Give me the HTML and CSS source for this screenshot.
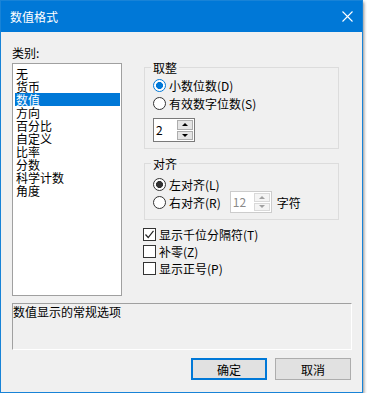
FILE: index.html
```html
<!DOCTYPE html>
<html lang="zh-CN">
<head>
    <meta charset="UTF-8">
    <title>数值格式</title>
    <link rel="stylesheet" href="styles.css">
</head>
<body>
    <div class="window">
        <div class="titlebar">
            <span class="title">数值格式</span>
            <span class="close">
                <svg width="11" height="11" viewBox="0 0 11 11">
                    <path d="M0.5 0.5 L10.5 10.5 M10.5 0.5 L0.5 10.5" stroke="#fff" stroke-width="1.1" fill="none"/>
                </svg>
            </span>
        </div>

        <div class="content">
            <div class="main">
                <div class="left-col">
                    <div class="field-label">类别:</div>
                    <ul class="category-list">
                        <li>无</li>
                        <li>货币</li>
                        <li class="selected">数值</li>
                        <li>方向</li>
                        <li>百分比</li>
                        <li>自定义</li>
                        <li>比率</li>
                        <li>分数</li>
                        <li>科学计数</li>
                        <li>角度</li>
                    </ul>
                </div>

                <div class="right-col">
                    <fieldset class="group rounding">
                        <legend>取整</legend>
                        <div class="option">
                            <span class="radio checked focus"></span>小数位数(D)
                        </div>
                        <div class="option">
                            <span class="radio"></span>有效数字位数(S)
                        </div>
                        <div class="spin">
                            <span class="spin-value">2</span>
                            <span class="spin-buttons">
                                <span class="spin-btn"><span class="arrow up"></span></span>
                                <span class="spin-btn"><span class="arrow down"></span></span>
                            </span>
                        </div>
                    </fieldset>

                    <fieldset class="group align">
                        <legend>对齐</legend>
                        <div class="option">
                            <span class="radio checked"></span>左对齐(L)
                        </div>
                        <div class="option">
                            <span class="radio"></span>右对齐(R)
                            <div class="spin disabled">
                                <span class="spin-value">12</span>
                                <span class="spin-buttons">
                                    <span class="spin-btn"><span class="arrow up"></span></span>
                                    <span class="spin-btn"><span class="arrow down"></span></span>
                                </span>
                            </div>
                            <span class="unit">字符</span>
                        </div>
                    </fieldset>

                    <div class="checks">
                        <div class="check-row">
                            <span class="checkbox">
                                <svg width="11" height="11" viewBox="0 0 11 11">
                                    <path d="M1.5 5.5 L4.2 8.5 L9.5 1.8" stroke="#222" stroke-width="1.2" fill="none"/>
                                </svg>
                            </span>显示千位分隔符(T)
                        </div>
                        <div class="check-row">
                            <span class="checkbox"></span>补零(Z)
                        </div>
                        <div class="check-row">
                            <span class="checkbox"></span>显示正号(P)
                        </div>
                    </div>
                </div>
            </div>

            <div class="description">数值显示的常规选项</div>

            <div class="buttons">
                <button class="btn default">确定</button>
                <button class="btn">取消</button>
            </div>
        </div>
    </div>
</body>
</html>
```

FILE: styles.css
```css
body, html {
    margin: 0;
    padding: 0;
    background: #FFFFFF;
    font-family: 'Noto Sans CJK SC', 'Noto Sans', sans-serif;
    font-size: 12px;
    color: #000000;
}

.window {
    width: 363px;
    box-sizing: border-box;
    border: 1px solid #1883D7;
    background: #F0F0F0;
    box-shadow: 1px 2px 3px rgba(0, 0, 0, 0.45);
}

.titlebar {
    display: flex;
    align-items: center;
    justify-content: space-between;
    height: 31px;
    padding: 0 9px 0 9px;
    background: #0078D7;
    color: #FFFFFF;
}

.title {
    font-size: 12px;
    line-height: 13px;
}

.close {
    display: flex;
    width: 11px;
    height: 11px;
}

.content {
    padding: 0 10px 12px 11px;
}

.main {
    display: flex;
    gap: 21px;
}

.left-col {
    width: 110px;
    padding-top: 14px;
}

.field-label {
    line-height: 13px;
    height: 13px;
}

.category-list {
    list-style: none;
    margin: 4px 0 0 0;
    padding: 3px 1px 0 2px;
    height: 233px;
    box-sizing: border-box;
    background: #FFFFFF;
    border: 1px solid #A0A0A0;
}

.category-list li {
    line-height: 13px;
    height: 13px;
    padding-left: 1px;
    white-space: nowrap;
}

.category-list li.selected {
    background: #0078D7;
    color: #FFFFFF;
}

.right-col {
    width: 196px;
    padding-top: 29px;
}

.group {
    margin: 0 0 0 1px;
    border: 1px solid #DCDCDC;
    min-width: 0;
}

.group legend {
    margin-left: -2px;
    padding: 0 2px;
    line-height: 13px;
}

.group.rounding {
    padding: 2px 0 6px 8px;
}

.group.align {
    margin-top: 8px;
    padding: 5px 0 8px 8px;
}

.option {
    display: flex;
    align-items: center;
    height: 18px;
    white-space: nowrap;
}

.radio {
    width: 13px;
    height: 13px;
    box-sizing: border-box;
    margin-right: 3px;
    border: 1px solid #333333;
    border-radius: 50%;
    background: #FFFFFF;
}

.radio.checked {
    background: radial-gradient(circle, #333333 3.2px, #FFFFFF 3.8px);
}

.radio.checked.focus {
    border-color: #0078D7;
    background: radial-gradient(circle, #0078D7 3.2px, #FFFFFF 3.8px);
}

.spin {
    display: flex;
    width: 42px;
    height: 24px;
    margin-top: 6px;
    box-sizing: border-box;
    border: 1px solid #7A7A7A;
    background: #FFFFFF;
}

.spin-value {
    flex: 1;
    padding-left: 2px;
    line-height: 21px;
}

.spin-buttons {
    display: flex;
    flex-direction: column;
    gap: 1px;
    width: 18px;
    padding: 1px 1px 1px 1px;
    box-sizing: border-box;
}

.spin-btn {
    display: flex;
    align-items: center;
    justify-content: center;
    flex: 1;
    border: 1px solid #ADADAD;
    background: #E5E5E5;
}

.arrow {
    width: 0;
    height: 0;
    border-left: 3px solid transparent;
    border-right: 3px solid transparent;
}

.arrow.up {
    border-bottom: 3px solid #000000;
}

.arrow.down {
    border-top: 3px solid #000000;
}

.spin.disabled {
    height: 22px;
    margin: -2px 0 -2px 9px;
    border-color: #CCCCCC;
    color: #8A8A8A;
}

.spin.disabled .spin-value {
    line-height: 19px;
}

.spin.disabled .spin-btn {
    border-color: #D9D9D9;
    background: #F4F4F4;
}

.spin.disabled .arrow.up {
    border-bottom-color: #A0A0A0;
}

.spin.disabled .arrow.down {
    border-top-color: #A0A0A0;
}

.unit {
    margin-left: 5px;
}

.checks {
    margin-top: 6px;
}

.check-row {
    display: flex;
    align-items: center;
    height: 17px;
    white-space: nowrap;
}

.checkbox {
    display: flex;
    align-items: center;
    justify-content: center;
    width: 13px;
    height: 13px;
    box-sizing: border-box;
    margin-right: 3px;
    border: 1px solid #333333;
    background: #FFFFFF;
}

.description {
    height: 47px;
    margin-top: 7px;
    box-sizing: border-box;
    border: 1px solid;
    border-color: #A0A0A0 #FFFFFF #FFFFFF #A0A0A0;
    line-height: 13px;
    padding-top: 1px;
}

.buttons {
    display: flex;
    justify-content: flex-end;
    gap: 8px;
    margin-top: 8px;
    padding-right: 1px;
}

.btn {
    width: 76px;
    height: 22px;
    padding: 0;
    font-family: 'Noto Sans CJK SC', 'Noto Sans', sans-serif;
    font-size: 12px;
    color: #000000;
    background: #E1E1E1;
    border: 1px solid #ADADAD;
}

.btn.default {
    border-color: #0078D7;
    box-shadow: inset 0 0 0 1px #0078D7;
}
```
